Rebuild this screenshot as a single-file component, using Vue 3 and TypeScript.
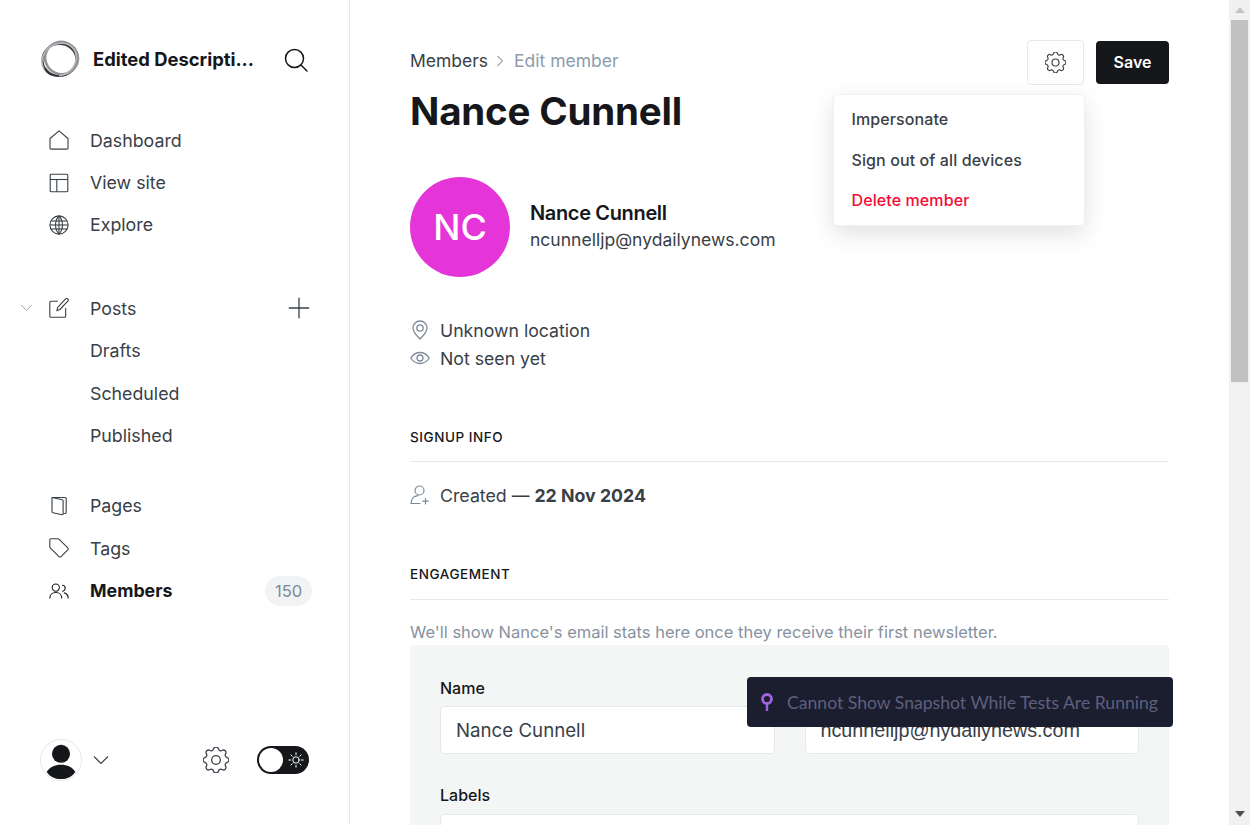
<script setup lang="ts">
interface NavItem { label: string; icon?: string; active?: boolean; count?: number }
const topNav: NavItem[] = [
  { label: 'Dashboard', icon: 'home' },
  { label: 'View site', icon: 'layout' },
  { label: 'Explore', icon: 'globe' },
]
const subNav: NavItem[] = [{ label: 'Drafts' }, { label: 'Scheduled' }, { label: 'Published' }]
const lowNav: NavItem[] = [
  { label: 'Pages', icon: 'page' },
  { label: 'Tags', icon: 'tag' },
  { label: 'Members', icon: 'members', active: true, count: 150 },
]
const iconPaths: Record<string, string[]> = {
  home: ['M1 8.500 10 .8l9 7.700V18.200a.9.9 0 0 1-.9.9H1.900a.9.9 0 0 1-.9-.9Z'],
  layout: ['M1.200 2.200a1 1 0 0 1 1-1h15.600a1 1 0 0 1 1 1v15.600a1 1 0 0 1-1 1H2.200a1 1 0 0 1-1-1Z', 'M1.200 6.500h17.600', 'M7.800 6.500v12.300'],
  globe: ['M10 .9a9.100 9.100 0 1 0 0 18.200A9.100 9.100 0 0 0 10 .9Z', 'M10 .9c-4.600 5-4.600 13.200 0 18.200', 'M10 .9c4.600 5 4.600 13.200 0 18.200', 'M10 .9v18.200', 'M.9 10h18.200', 'M2.200 6h15.600', 'M2.200 14h15.600'],
  page: ['M3 1.500h13.200a1 1 0 0 1 1 1v14a1 1 0 0 1-1 1h-2', 'M3 1.500l10.200 2.200a1 1 0 0 1 .9 1V18a.7.700 0 0 1-.9.7l-9.300-2a1 1 0 0 1-.9-1Z'],
  tag: ['M.8 2A1.200 1.200 0 0 1 2 .8h6.800a2 2 0 0 1 1.400.6l8.600 8.400a1.400 1.400 0 0 1 0 2l-6.800 6.800a1.400 1.400 0 0 1-2 0L1.400 10.200A2 2 0 0 1 .8 8.800Z'],
  members: ['M6.800 3a3.600 3.600 0 1 0 0 7.200A3.600 3.600 0 0 0 6.800 3Z', 'M.8 17.500c0-3.600 2.600-6 6-6s6 2.400 6 6', 'M13.200 4.200a3 3 0 1 1 0 6', 'M15 11.900c2.500.5 4.200 2.600 4.200 5.600'],
}
const gear = 'M10.325 4.317c.426-1.756 2.924-1.756 3.35 0a1.724 1.724 0 0 0 2.573 1.066c1.543-.94 3.31.826 2.37 2.37a1.724 1.724 0 0 0 1.065 2.572c1.756.426 1.756 2.924 0 3.35a1.724 1.724 0 0 0-1.066 2.573c.94 1.543-.826 3.31-2.37 2.37a1.724 1.724 0 0 0-2.572 1.065c-.426 1.756-2.924 1.756-3.35 0a1.724 1.724 0 0 0-2.573-1.066c-1.543.94-3.31-.826-2.37-2.37a1.724 1.724 0 0 0-1.065-2.572c-1.756-.426-1.756-2.924 0-3.35a1.724 1.724 0 0 0 1.066-2.573c-.94-1.543.826-3.31 2.37-2.37.996.608 2.296.07 2.572-1.065Z'
</script>

<template>
  <div class="page">
    <aside class="sidebar">
      <header class="brand">
        <svg class="logo" viewBox="0 0 40 40" fill="none">
          <ellipse cx="19.500" cy="21" rx="17" ry="16" stroke="#3a3d40" stroke-width="2" />
          <ellipse cx="21" cy="18.500" rx="16.500" ry="16" stroke="#8f9296" stroke-width="2.600" transform="rotate(25 20 20)" />
          <ellipse cx="19" cy="20" rx="18" ry="15.500" stroke="#b6b8ba" stroke-width="1.600" transform="rotate(-35 20 20)" />
          <path d="M5 29c2 5 7 8 14 8" stroke="#2f3134" stroke-width="2" />
        </svg>
        <span class="brand-name">Edited Descripti...</span>
        <svg class="search" viewBox="0 0 24 24" fill="none" stroke="#15171a" stroke-width="1.500" stroke-linecap="round">
          <circle cx="10.500" cy="10.500" r="9" />
          <path d="M17 17l6 6" />
        </svg>
      </header>

      <nav class="nav-group first">
        <a v-for="item in topNav" :key="item.label" class="nav-item">
          <svg class="nav-icon" viewBox="0 0 20 20" fill="none" stroke="#394047" stroke-width="1.100" stroke-linejoin="round">
            <path v-for="d in iconPaths[item.icon!]" :key="d" :d="d" />
          </svg>
          <span>{{ item.label }}</span>
        </a>
      </nav>

      <nav class="nav-group second">
        <div class="nav-item">
          <svg class="caret" viewBox="0 0 12 8" fill="none" stroke="#9aa5b0" stroke-width="1"><path d="M.8 1l5.200 5.500L11.200 1" /></svg>
          <svg class="nav-icon" viewBox="0 0 20 20" fill="none" stroke="#394047" stroke-width="1.100" stroke-linejoin="round">
            <path d="M9 3.300H1.800a1 1 0 0 0-1 1v13.900a1 1 0 0 0 1 1h13.900a1 1 0 0 0 1-1V10" />
            <path d="M7.800 12.800l.9-3.500L16.600.9a1.500 1.500 0 0 1 2.100 0l.1.100a1.500 1.500 0 0 1 0 2.100L10.900 11.500Z" />
          </svg>
          <span>Posts</span>
          <svg class="plus" viewBox="0 0 22 22" fill="none" stroke="#394047" stroke-width="1.300"><path d="M11 .8v20.400M.8 11h20.400" /></svg>
        </div>
        <a v-for="item in subNav" :key="item.label" class="nav-item">
          <span class="icon-gap"></span>
          <span>{{ item.label }}</span>
        </a>
      </nav>

      <nav class="nav-group third">
        <a v-for="item in lowNav" :key="item.label" class="nav-item" :class="{ active: item.active }">
          <svg class="nav-icon" viewBox="0 0 20 20" fill="none" :stroke="item.active ? '#15171a' : '#394047'" stroke-width="1.100" stroke-linejoin="round">
            <path v-for="d in iconPaths[item.icon!]" :key="d" :d="d" />
          </svg>
          <span>{{ item.label }}</span>
          <span v-if="item.count" class="count">{{ item.count }}</span>
        </a>
      </nav>

      <footer class="side-foot">
        <span class="user-avatar">
          <svg viewBox="0 0 42 42"><circle cx="21" cy="14.500" r="9.500" fill="#15171a" /><path d="M6 33.500c3-5 8.500-7.500 15-7.500s12 2.500 15 7.500c-3 4.500-8.500 7.500-15 7.500S9 38 6 33.500Z" fill="#15171a" /></svg>
        </span>
        <svg class="foot-caret" viewBox="0 0 16 10" fill="none" stroke="#394047" stroke-width="1.100"><path d="M1 1.500l7 7 7-7" /></svg>
        <svg class="foot-gear" viewBox="3 3 18 18" fill="none" stroke="#394047" stroke-width=".9" stroke-linejoin="round"><path :d="gear" /><circle cx="12" cy="12" r="3" /></svg>
        <span class="toggle">
          <span class="knob"></span>
          <svg class="sun" viewBox="0 0 16 16" fill="none" stroke="#fff" stroke-width="1" stroke-linecap="round"><circle cx="8" cy="8" r="3.200" /><path d="M8 .8v2M8 13.200v2M.8 8h2M13.200 8h2M2.900 2.900l1.400 1.400M11.700 11.700l1.400 1.400M2.900 13.100l1.400-1.400M11.700 4.300l1.400-1.400" /></svg>
        </span>
      </footer>
    </aside>

    <main class="content">
      <div class="topbar">
        <div class="crumbs">
          <span class="crumb-link">Members</span>
          <svg class="crumb-sep" viewBox="0 0 8 12" fill="none" stroke="#9aa5b0" stroke-width="1.100"><path d="M1.500 1l5 5-5 5" /></svg>
          <span class="crumb-current">Edit member</span>
        </div>
        <div class="actions">
          <button class="gear-btn">
            <svg viewBox="3 3 18 18" fill="none" stroke="#394047" stroke-width="1" stroke-linejoin="round"><path :d="gear" /><circle cx="12" cy="12" r="3" /></svg>
          </button>
          <button class="save-btn">Save</button>
        </div>
      </div>

      <h1 class="title">Nance Cunnell</h1>

      <section class="profile">
        <div class="avatar">NC</div>
        <div class="identity">
          <div class="person">Nance Cunnell</div>
          <div class="mail">ncunnelljp@nydailynews.com</div>
        </div>
      </section>

      <section class="meta">
        <div class="meta-row">
          <svg viewBox="0 0 20 20" fill="none" stroke="#7c8b9a" stroke-width="1.300"><path d="M10 19c-1-1.500-7-6-7-11a7 7 0 0 1 14 0c0 5-6 9.500-7 11Z" /><circle cx="10" cy="8" r="3.200" /></svg>
          <span>Unknown location</span>
        </div>
        <div class="meta-row">
          <svg viewBox="0 0 20 20" fill="none" stroke="#7c8b9a" stroke-width="1.300"><path d="M.8 10C3 6.500 6.200 4.500 10 4.500s7 2 9.200 5.500c-2.200 3.500-5.400 5.500-9.200 5.500S3 13.500.8 10Z" /><circle cx="10" cy="10" r="3" /></svg>
          <span>Not seen yet</span>
        </div>
      </section>

      <h4 class="section-head signup">SIGNUP INFO</h4>
      <div class="meta-row created">
        <svg viewBox="0 0 20 20" fill="none" stroke="#7c8b9a" stroke-width="1.200" stroke-linecap="round"><circle cx="9.500" cy="5.500" r="4.500" /><path d="M1 18.500c0-4.500 3-7.500 7-7.800M10 18.500H1M15.500 13.500v5.500M12.700 16.200h5.600" /></svg>
        <span>Created — <strong>22 Nov 2024</strong></span>
      </div>

      <h4 class="section-head engagement">ENGAGEMENT</h4>
      <p class="hint">We'll show Nance's email stats here once they receive their first newsletter.</p>

      <section class="panel">
        <div class="field-row">
          <label class="field">
            <span class="field-label">Name</span>
            <span class="input">Nance Cunnell</span>
          </label>
          <label class="field">
            <span class="field-label">Email</span>
            <span class="input arial">ncunnelljp@nydailynews.com</span>
          </label>
        </div>
        <label class="field labels">
          <span class="field-label">Labels</span>
          <span class="input"></span>
        </label>
      </section>
    </main>

    <div class="scrollbar">
      <svg class="arrow" viewBox="0 0 10 6"><path d="M5 0l5 6H0Z" fill="#c4c4c4" /></svg>
      <span class="thumb"></span>
      <svg class="arrow down" viewBox="0 0 10 6"><path d="M0 0h10L5 6Z" fill="#505050" /></svg>
    </div>

    <div class="dropdown">
      <div class="drop-item">Impersonate</div>
      <div class="drop-item">Sign out of all devices</div>
      <div class="drop-item danger">Delete member</div>
    </div>

    <div class="toast">
      <svg viewBox="0 0 12 18" fill="none"><circle cx="6" cy="6" r="4.500" stroke="#a064e0" stroke-width="2.800" /><path d="M6 11v6.500" stroke="#a064e0" stroke-width="2.400" stroke-linecap="round" /></svg>
      <span>Cannot Show Snapshot While Tests Are Running</span>
    </div>
  </div>
</template>

<style>
html, body { margin: 0; overflow: hidden; background: #fff; }
</style>

<style scoped>
* { box-sizing: border-box; }
.page {
  position: relative;
  display: flex;
  width: 1250px;
  height: 825px;
  overflow: hidden;
  font-family: Inter, "Liberation Sans", sans-serif;
  color: #394047;
  background: #fff;
}
.sidebar {
  display: flex;
  flex-direction: column;
  flex: 0 0 350px;
  border-right: 1px solid #e6e9eb;
  padding: 39px 38px 44px 40px;
}
.brand { display: flex; align-items: center; height: 40px; }
.logo { width: 40px; height: 40px; flex: none; }
.brand-name { margin-left: 13px; font-size: 18.400px; font-weight: 700; color: #15171a; white-space: nowrap; }
.search { width: 24px; height: 24px; margin: 1px 3px 0 auto; }
.nav-group { display: flex; flex-direction: column; }
.first { margin-top: 40px; }
.second { margin-top: 41px; }
.third { margin-top: 28px; }
.nav-item {
  position: relative;
  display: flex;
  align-items: center;
  height: 42.400px;
  font-size: 17.800px;
  color: #394047;
}
.nav-item.active { font-weight: 700; color: #15171a; }
.nav-icon { width: 20px; height: 20px; margin: 0 21px 0 9px; flex: none; }
.icon-gap { width: 50px; flex: none; }
.caret { position: absolute; left: -20px; width: 13px; height: 8px; }
.plus { width: 22px; height: 22px; margin-left: auto; margin-right: 1px; }
.count {
  margin-left: auto;
  margin-right: -1px;
  display: inline-flex;
  align-items: center;
  justify-content: center;
  width: 47px;
  height: 30px;
  border-radius: 15px;
  background: #f1f3f4;
  font-size: 16.500px;
  font-weight: 400;
  color: #7c8b9a;
}
.side-foot { display: flex; align-items: center; margin-top: auto; height: 42px; }
.user-avatar { width: 42px; height: 42px; border-radius: 50%; border: 1px solid #e6e9eb; overflow: hidden; flex: none; }
.user-avatar svg { display: block; width: 40px; height: 40px; }
.foot-caret { width: 16px; height: 10px; margin-left: 11px; }
.foot-gear { width: 26px; height: 26px; margin-left: 94px; }
.toggle {
  position: relative;
  display: flex;
  align-items: center;
  width: 52px;
  height: 28px;
  margin-left: 28px;
  margin-right: 1px;
  border-radius: 14px;
  background: #15171a;
}
.knob { width: 24px; height: 24px; margin-left: 2px; border-radius: 50%; background: #fff; }
.sun { width: 16px; height: 16px; margin-left: 5px; }

.content { flex: 0 0 879px; padding: 40px 60px 0; height: 825px; overflow: hidden; }
.topbar { display: flex; align-items: flex-start; justify-content: space-between; height: 45px; }
.crumbs { display: flex; align-items: center; height: 41px; font-size: 17.500px; margin-top: 0; }
.crumb-link { color: #394047; }
.crumb-sep { width: 8px; height: 12px; margin: 0 10px 0 8px; }
.crumb-current { color: #8e9cac; }
.actions { display: flex; gap: 12px; align-items: flex-start; }
.gear-btn {
  display: flex; align-items: center; justify-content: center;
  width: 57px; height: 45px; padding: 0;
  border: 1px solid #e6e9eb; border-radius: 4px; background: #fff;
}
.gear-btn svg { width: 21px; height: 21px; }
.save-btn {
  width: 73px; height: 43px; margin-top: 1px; padding: 0 0 2px;
  border: 0; border-radius: 4px; background: #15171a; color: #fff;
  font: 600 16px Inter, sans-serif;
}
.title { margin: 1px 0 0; height: 50px; font-size: 38.500px; line-height: 50px; font-weight: 700; letter-spacing: -0.2px; color: #15171a; }
.profile { display: flex; align-items: center; margin-top: 41px; }
.avatar {
  display: flex; align-items: center; justify-content: center;
  width: 100px; height: 100px; border-radius: 50%;
  background: #e535d8; color: #fff; font-size: 36px; font-weight: 500;
}
.identity { margin-left: 20px; margin-top: -1px; }
.person { font-size: 20px; line-height: 26px; font-weight: 600; color: #15171a; letter-spacing: -0.35px; }
.mail { font-size: 17.550px; line-height: 28px; color: #394047; }
.meta { margin-top: 39px; }
.meta-row { display: flex; align-items: center; height: 28px; font-size: 17.700px; color: #394047; }
.meta-row svg { width: 20px; height: 20px; margin-right: 10px; flex: none; }
.section-head {
  margin: 0; padding-bottom: 14px;
  border-bottom: 1px solid #e6e9eb;
  font-size: 13.500px; line-height: 20px; font-weight: 500; color: #15171a;
  letter-spacing: 0.55px;
}
.signup { margin-top: 55px; }
.created { margin-top: 19px; font-size: 17.750px; }
.created strong { font-weight: 700; }
.engagement { margin-top: 55px; padding-bottom: 15px; }
.hint { margin: 22px 0 0; height: 24px; font-size: 16.500px; line-height: 20px; color: #8792a0; }
.panel { margin-top: -1px; padding: 30px; border-radius: 4px; background: #f4f6f6; height: 300px; }
.field-row { display: flex; gap: 30px; }
.field { display: flex; flex-direction: column; flex: 1 1 0; }
.field-label { font-size: 16px; line-height: 26px; font-weight: 500; color: #15171a; margin-bottom: 5px; }
.input {
  display: flex; align-items: center;
  height: 48px; padding: 0 15px;
  border: 1px solid #e6e9eb; border-radius: 4px; background: #fff;
  font-size: 18.700px; color: #394047;
}
.input.arial { font-family: "Liberation Sans", Arial, sans-serif; font-size: 19.750px; }
.labels { margin-top: 28px; }
.labels .field-label { margin-bottom: 6px; }

.scrollbar {
  display: flex; flex-direction: column; align-items: center;
  flex: 0 0 21px; margin-left: 0; padding: 0 2px; background: #f1f1f1;
}
.arrow { width: 10px; height: 6px; margin: 7px 0; flex: none; }
.arrow.down { margin-top: auto; margin-bottom: 8px; }
.thumb { width: 100%; height: 362px; margin-top: 0; background: #c1c1c1; }

.dropdown {
  position: absolute; left: 833px; top: 94px;
  width: 252px; height: 132px; padding: 4px 0;
  border: 1px solid #eef0f1; border-radius: 4px; background: #fff;
  box-shadow: 0 8px 24px rgba(0, 0, 0, 0.12);
}
.drop-item { height: 40.500px; padding: 0 17.500px; font-size: 16px; line-height: 40px; font-weight: 500; color: #394047; letter-spacing: 0.1px; }
.drop-item.danger { color: #f50b35; }

.toast {
  position: absolute; left: 747px; top: 677px;
  display: flex; align-items: center; gap: 14px;
  width: 426px; height: 50px; padding: 0 14px;
  border-radius: 4px; background: #1b1e2e;
  color: #5f5f7e; font: 400 17.600px Lato, sans-serif; white-space: nowrap;
}
.toast svg { width: 12px; height: 18px; flex: none; }
</style>
